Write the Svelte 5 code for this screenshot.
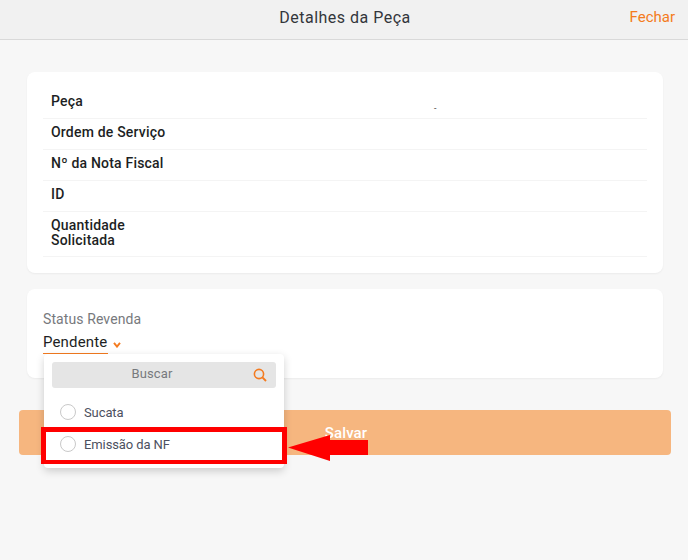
<script lang="ts">
  // linhas do cartão de detalhes
  const rows = ['Peça', 'Ordem de Serviço', 'Nº da Nota Fiscal', 'ID', 'Quantidade Solicitada'];
  const options = ['Sucata', 'Emissão da NF'];
</script>

<div class="page">
  <header class="topbar">
    <h1>Detalhes da Peça</h1>
    <span class="close">Fechar</span>
  </header>

  <section class="card details">
    {#each rows as row}
      <div class="row"><span class="label">{row}</span></div>
    {/each}
    <span class="dash">-</span>
  </section>

  <section class="card status">
    <div class="status-label">Status Revenda</div>
    <div class="select">
      <span class="value">Pendente</span>
      <svg class="chevron" width="8" height="6" viewBox="0 0 8 6">
        <path d="M1 .8l3 3.800L7 .8" fill="none" stroke="#f47b20" stroke-width="1.9" />
      </svg>
    </div>
  </section>

  <button class="save" type="button">Salvar</button>

  <div class="dropdown">
    <div class="search">
      <span>Buscar</span>
      <svg class="lens" width="14" height="14" viewBox="0 0 14 14">
        <circle cx="6" cy="6" r="4.6" fill="none" stroke="#f47b20" stroke-width="1.6" />
        <path d="M9.400 9.400l3.600 3.600" stroke="#f47b20" stroke-width="1.900" />
      </svg>
    </div>
    {#each options as opt}
      <div class="option"><span class="radio"></span>{opt}</div>
    {/each}
  </div>

  <div class="highlight"></div>
  <svg class="arrow" width="82" height="32" viewBox="0 0 82 32">
    <path d="M1 15.500L43 3V8H81V23H43V29Z" fill="#ff0000" />
  </svg>
</div>

<style>
  :global(body) {
    margin: 0;
    background: #f7f7f7;
  }

  .page {
    position: relative;
    width: 688px;
    height: 560px;
    overflow: hidden;
    background: #f7f7f7;
    font-family: Roboto, "Liberation Sans", sans-serif;
  }

  .topbar {
    height: 39px;
    background: #f1f1f1;
    border-bottom: 1px solid #d9d9d9;
    display: flex;
    align-items: center;
    justify-content: center;
    position: relative;
  }

  .topbar h1 {
    margin: 0 0 5px 2px;
    font-size: 16px;
    font-weight: 400;
    letter-spacing: 0.5px;
    color: #33363b;
  }

  .close {
    position: absolute;
    right: 13px;
    top: 8px;
    font-size: 15px;
    letter-spacing: 0;
    color: #f47b20;
  }

  .card {
    background: #fff;
    border-radius: 8px;
    box-shadow: 0 1px 2px rgba(0, 0, 0, 0.05);
  }

  .details {
    position: relative;
    height: 201px;
    margin: 32px 25px 0 27px;
    padding: 16px 16px 0 16px;
    box-sizing: border-box;
  }

  .row {
    padding: 6px 8px 9px;
    border-bottom: 1px solid #f4f4f4;
    line-height: 15px;
  }

  .row:last-of-type {
    padding: 6px 8px 9px;
    line-height: 14.5px;
  }

  .label {
    display: block;
    width: 125px;
    font-size: 14px;
    font-weight: 500;
    letter-spacing: 0.2px;
    color: #1d1f24;
  }

  .dash {
    position: absolute;
    left: 407px;
    top: 31px;
    font-size: 9px;
    color: #444;
  }

  .status {
    height: 89px;
    margin: 16px 25px 0 27px;
    padding: 22px 16px 0;
    box-sizing: border-box;
  }

  .status-label {
    font-size: 14px;
    line-height: 16px;
    letter-spacing: 0.1px;
    color: #77797d;
  }

  .select {
    display: flex;
    align-items: center;
    margin-top: 6px;
  }

  .value {
    width: 65px;
    font-size: 15px;
    line-height: 18px;
    letter-spacing: 0.15px;
    color: #1d1f24;
    padding-bottom: 2px;
    border-bottom: 1px solid #f47b20;
  }

  .chevron {
    margin: 3px 0 0 5px;
  }

  .save {
    display: block;
    width: 652px;
    height: 45px;
    margin: 32px 0 0 19px;
    padding-left: 8px;
    border: 0;
    border-radius: 4px;
    background: #f6b67f;
    color: #fff;
    font: 500 15px Roboto, sans-serif;
    letter-spacing: 0.1px;
  }

  .dropdown {
    position: absolute;
    left: 44px;
    top: 354px;
    width: 240px;
    height: 114px;
    box-sizing: border-box;
    padding: 8px 8px 0;
    background: #fff;
    border-radius: 4px;
    box-shadow: 0 3px 8px rgba(0, 0, 0, 0.18);
  }

  .search {
    position: relative;
    height: 26px;
    padding-right: 24px;
    border-radius: 3px;
    background: #e5e5e5;
    text-align: center;
    font-size: 13px;
    line-height: 24px;
    letter-spacing: 0.1px;
    color: #77797d;
  }

  .lens {
    position: absolute;
    right: 9px;
    top: 6px;
  }

  .option {
    display: flex;
    align-items: center;
    gap: 8px;
    height: 32px;
    padding-left: 8px;
    font-size: 13px;
    letter-spacing: -0.1px;
    color: #4c5060;
  }

  .search + .option {
    margin-top: 8px;
  }

  .radio {
    width: 14px;
    height: 14px;
    border: 1px solid #c9c9c9;
    border-radius: 50%;
  }

  .highlight {
    position: absolute;
    left: 41px;
    top: 427px;
    width: 236px;
    height: 28px;
    border-style: solid;
    border-color: #ff0000;
    border-width: 5px 5px 4px;
  }

  .arrow {
    position: absolute;
    left: 287px;
    top: 432px;
  }
</style>
